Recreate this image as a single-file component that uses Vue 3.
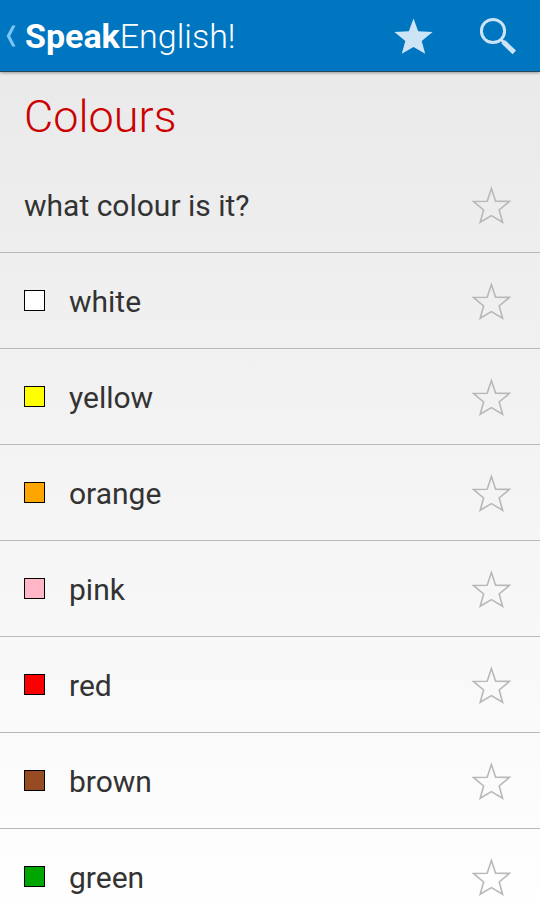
<script setup>
import { reactive } from 'vue'

const phrases = reactive([
  { text: 'what colour is it?', swatch: null, starred: false },
  { text: 'white', swatch: '#ffffff', starred: false },
  { text: 'yellow', swatch: '#ffff00', starred: false },
  { text: 'orange', swatch: '#ffa500', starred: false },
  { text: 'pink', swatch: '#ffb6c6', starred: false },
  { text: 'red', swatch: '#fa0000', starred: false },
  { text: 'brown', swatch: '#964b22', starred: false },
  { text: 'green', swatch: '#00a600', starred: false },
])
</script>

<template>
  <div class="screen">
    <header class="bar">
      <a class="home" href="#" aria-label="Back to SpeakEnglish!">
        <svg class="chevron" viewBox="0 0 10 22" aria-hidden="true">
          <path d="M6.2 0.5H9.6L4.2 11L9.6 21.5H6.2L0.6 11Z" />
        </svg>
        <span class="brand"><b>Speak</b><span>English!</span></span>
      </a>
      <nav class="actions">
        <button type="button" class="action" aria-label="Favourites">
          <svg viewBox="0 0 40 40" aria-hidden="true">
            <path class="solid" d="M19.5 2.6L24.2 15.3L38.6 15.9L27.7 25L31.2 37.8L19.5 31L7.8 37.8L11.3 25L0.4 15.9L14.8 15.3Z" />
          </svg>
        </button>
        <button type="button" class="action" aria-label="Search">
          <svg viewBox="0 0 40 40" aria-hidden="true">
            <circle class="lens" cx="15" cy="15" r="11.6" />
            <path class="neck" d="M22.5 23L26 26.5" />
            <path class="handle" d="M25.2 25.8L36.3 36.4" />
          </svg>
        </button>
      </nav>
    </header>

    <main class="content">
      <h1 class="title">Colours</h1>
      <ul class="list">
        <li v-for="phrase in phrases" :key="phrase.text" class="row">
          <span v-if="phrase.swatch" class="swatch" :style="{ backgroundColor: phrase.swatch }"></span>
          <span class="label">{{ phrase.text }}</span>
          <button
            type="button"
            class="star"
            :class="{ on: phrase.starred }"
            :aria-label="'Favourite ' + phrase.text"
            :aria-pressed="phrase.starred"
            @click="phrase.starred = !phrase.starred"
          >
            <svg viewBox="0 0 40 40" aria-hidden="true">
              <path d="M20.4 3.6L24.6 16.2L38.4 16.4L28.2 25L31.6 37.2L20.4 30.6L9.2 37.2L12.6 25L2.4 16.4L16.2 16.2Z" />
            </svg>
          </button>
        </li>
      </ul>
    </main>
  </div>
</template>

<style>
body {
  margin: 0;
}
</style>

<style scoped>
.screen {
  display: flex;
  flex-direction: column;
  height: 100vh;
  overflow: hidden;
  background: linear-gradient(#e8e8e8, #ffffff);
  color: #333333;
  font-family: Roboto, "Liberation Sans", sans-serif;
}

.bar {
  display: flex;
  align-items: center;
  justify-content: space-between;
  flex: none;
  box-sizing: border-box;
  height: 72px;
  padding: 0 22px 0 6px;
  border-bottom: 1px solid #27475c;
  background: #0076c0;
  box-shadow: 0 1px 3px rgba(0, 0, 0, 0.35);
}

.home {
  display: flex;
  align-items: center;
  gap: 9px;
  color: #ffffff;
  text-decoration: none;
}

.chevron {
  width: 10px;
  height: 22px;
  fill: #7cc4f2;
}

.brand {
  font-size: 34px;
  line-height: 40px;
  font-weight: 300;
  white-space: nowrap;
}

.brand b {
  font-weight: 700;
}

.actions {
  display: flex;
  gap: 44px;
}

.action,
.star {
  display: block;
  flex: none;
  width: 40px;
  height: 40px;
  padding: 0;
  border: 0;
  background: none;
  cursor: pointer;
}

.action svg,
.star svg {
  display: block;
  width: 100%;
  height: 100%;
}

.solid {
  fill: #cce4f5;
}

.lens,
.neck,
.handle {
  fill: none;
  stroke: #cce4f5;
}

.lens {
  stroke-width: 3;
}

.neck {
  stroke-width: 3;
}

.handle {
  stroke-width: 5;
}

.content {
  flex: 1;
  min-height: 0;
  overflow-y: auto;
  scrollbar-width: none;
}

.title {
  margin: 0;
  padding: 17px 24px 12px;
  color: #cc0000;
  font-size: 45px;
  line-height: 56px;
  font-weight: 300;
}

.list {
  margin: 0;
  padding: 0;
  list-style: none;
}

.row {
  display: flex;
  align-items: center;
  gap: 24px;
  box-sizing: border-box;
  height: 96px;
  padding: 0 29px 0 24px;
  border-bottom: 1px solid #b9b9b9;
}

.swatch {
  flex: none;
  box-sizing: border-box;
  width: 21px;
  height: 21px;
  border: 1px solid #000000;
}

.label {
  flex: 1;
  padding-top: 2px;
  font-size: 30px;
  line-height: 40px;
}

.star path {
  fill: none;
  stroke: #b8b8b8;
  stroke-width: 1.6;
}

.star.on path {
  fill: #b8b8b8;
}
</style>
